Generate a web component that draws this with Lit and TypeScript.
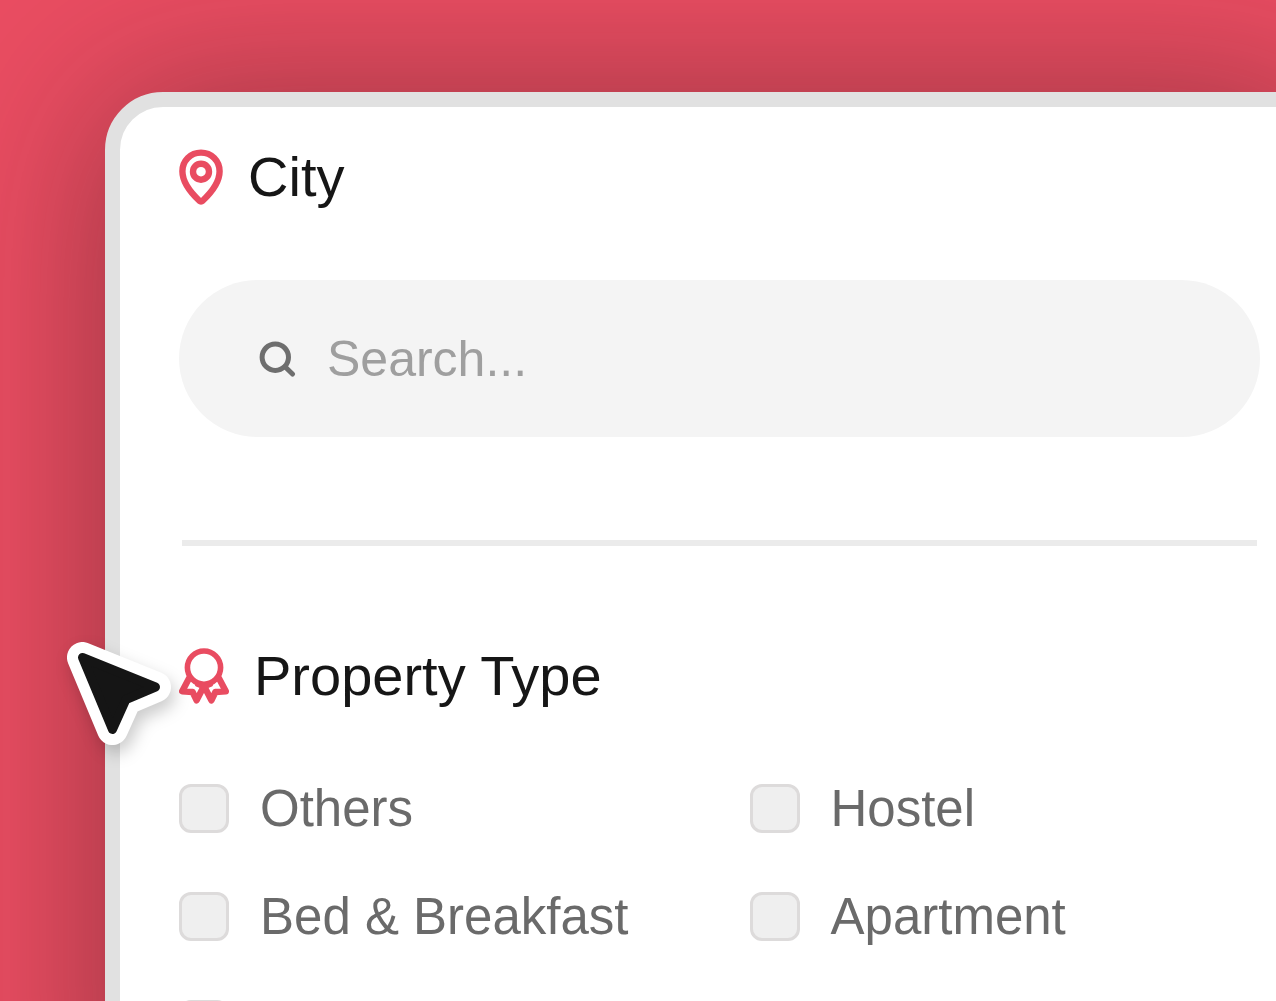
import { LitElement, html, css } from "lit";
import { customElement, property, state } from "lit/decorators.js";

@customElement("filter-option")
class FilterOption extends LitElement {
  @property() label = "";
  @property() name = "";

  static styles = css`
    :host {
      display: block;
      min-width: 0;
    }
    .option {
      display: flex;
      align-items: center;
      gap: 31px;
      height: 49px;
      font-size: 51px;
      line-height: 49px;
      color: #6a6a6a;
      white-space: nowrap;
      cursor: pointer;
    }
    .box {
      appearance: none;
      flex: none;
      box-sizing: border-box;
      width: 50px;
      height: 49px;
      margin: 0;
      border: 3px solid #dddbdb;
      border-radius: 12px;
      background: #efefef;
      cursor: pointer;
    }
    .box:checked {
      background: #e94c61;
      border-color: #e94c61;
    }
  `;

  render() {
    return html`<label class="option">
      <input class="box" type="checkbox" name="type" aria-label=${this.label || this.name} />
      <span>${this.label}</span>
    </label>`;
  }
}

@customElement("app-root")
class AppRoot extends LitElement {
  @state() private options = [
    { label: "Others", name: "others" },
    { label: "Hostel", name: "hostel" },
    { label: "Bed & Breakfast", name: "bnb" },
    { label: "Apartment", name: "apartment" },
    { label: "", name: "More types" },
  ];

  static styles = css`
    :host {
      display: block;
      position: relative;
      box-sizing: border-box;
      height: 100vh;
      padding: 92px 0 0 105px;
      overflow: hidden;
      background: #ea4d62;
      font-family: "Liberation Sans", Arial, Helvetica, sans-serif;
    }
    .panel {
      box-sizing: border-box;
      min-height: 120%;
      margin-right: -58px;
      padding: 38px 59px;
      border: 15px solid #e1e1e1;
      border-radius: 58px;
      background: #fff;
      box-shadow: 0 6px 170px rgba(40, 20, 20, 0.43);
    }
    .heading {
      display: flex;
      align-items: center;
      gap: 25px;
      height: 64px;
      margin: 0;
      font-size: 56px;
      font-weight: 400;
      line-height: 64px;
      color: #161616;
    }
    .icon {
      flex: none;
      display: block;
      fill: none;
      stroke: #e94c61;
      stroke-linecap: round;
      stroke-linejoin: round;
    }
    .icon.muted {
      stroke: #6e6e6e;
    }
    .search {
      display: flex;
      align-items: center;
      gap: 31px;
      box-sizing: border-box;
      height: 157px;
      margin-top: 71px;
      padding: 0 80px;
      border-radius: 80px;
      background: #f4f4f4;
    }
    .field {
      flex: 1;
      min-width: 0;
      height: 60px;
      padding: 0;
      border: 0;
      outline: 0;
      background: none;
      font: inherit;
      font-size: 50px;
      color: #161616;
    }
    .field::placeholder {
      color: #9f9f9f;
      opacity: 1;
    }
    .divider {
      height: 6px;
      margin: 103px 3px 98px;
      border: 0;
      background: #ebebeb;
    }
    .options {
      display: grid;
      grid-template-columns: 1fr 1fr;
      gap: 59px 60px;
      margin-top: 76px;
    }
    .pointer {
      position: absolute;
      left: 50px;
      top: 620px;
      overflow: visible;
      filter: drop-shadow(4px 8px 8px rgba(0, 0, 0, 0.2));
      pointer-events: none;
    }
  `;

  render() {
    return html`
      <main class="panel">
        <h2 class="heading">
          <svg class="icon" width="44" height="56" viewBox="0 0 44 56" stroke-width="6.4" aria-hidden="true">
            <path d="M22 3.6C11.6 3.6 3.4 11.8 3.4 22.3C3.4 33.5 11.5 43.5 20.6 52a2 2 0 0 0 2.8 0C32.5 43.5 40.6 33.5 40.6 22.3C40.6 11.8 32.4 3.6 22 3.6Z" />
            <circle cx="22" cy="22.7" r="8" />
          </svg>
          <span>City</span>
        </h2>
        <div class="search">
          <svg class="icon muted" width="37" height="36" viewBox="0 0 37 36" stroke-width="5" aria-hidden="true">
            <circle cx="16.3" cy="16.2" r="13.2" />
            <path d="M26 25.8L33.5 33" />
          </svg>
          <input class="field" type="text" placeholder="Search..." aria-label="Search city" />
        </div>
        <hr class="divider" />
        <h2 class="heading">
          <svg class="icon" width="50" height="56" viewBox="0 0 50 56" stroke-width="5.6" aria-hidden="true">
            <circle cx="25" cy="19.6" r="16.6" />
            <path d="M10.2 30L3.2 43.2L13.6 44L17.6 52.3L25 38L32.4 52.3L36.4 44L46.8 43.2L39.8 30" stroke-width="6.4" />
            <path d="M18.5 36.5L25 39L31.5 36.5" stroke-width="5" />
          </svg>
          <span>Property Type</span>
        </h2>
        <div class="options" role="group" aria-label="Property Type">
          ${this.options.map(
            (o) => html`<filter-option .label=${o.label} .name=${o.name}></filter-option>`
          )}
        </div>
      </main>
      <svg class="pointer" width="124" height="128" viewBox="0 0 124 128" stroke-linejoin="round" aria-hidden="true">
        <path d="M32.5 37.5L105.5 67L76 79.5L62.5 109.5Z" fill="#fff" stroke="#fff" stroke-width="31" />
        <path d="M32.5 37.5L105.5 67L76 79.5L62.5 109.5Z" fill="#151515" stroke="#151515" stroke-width="9" />
      </svg>
    `;
  }
}
